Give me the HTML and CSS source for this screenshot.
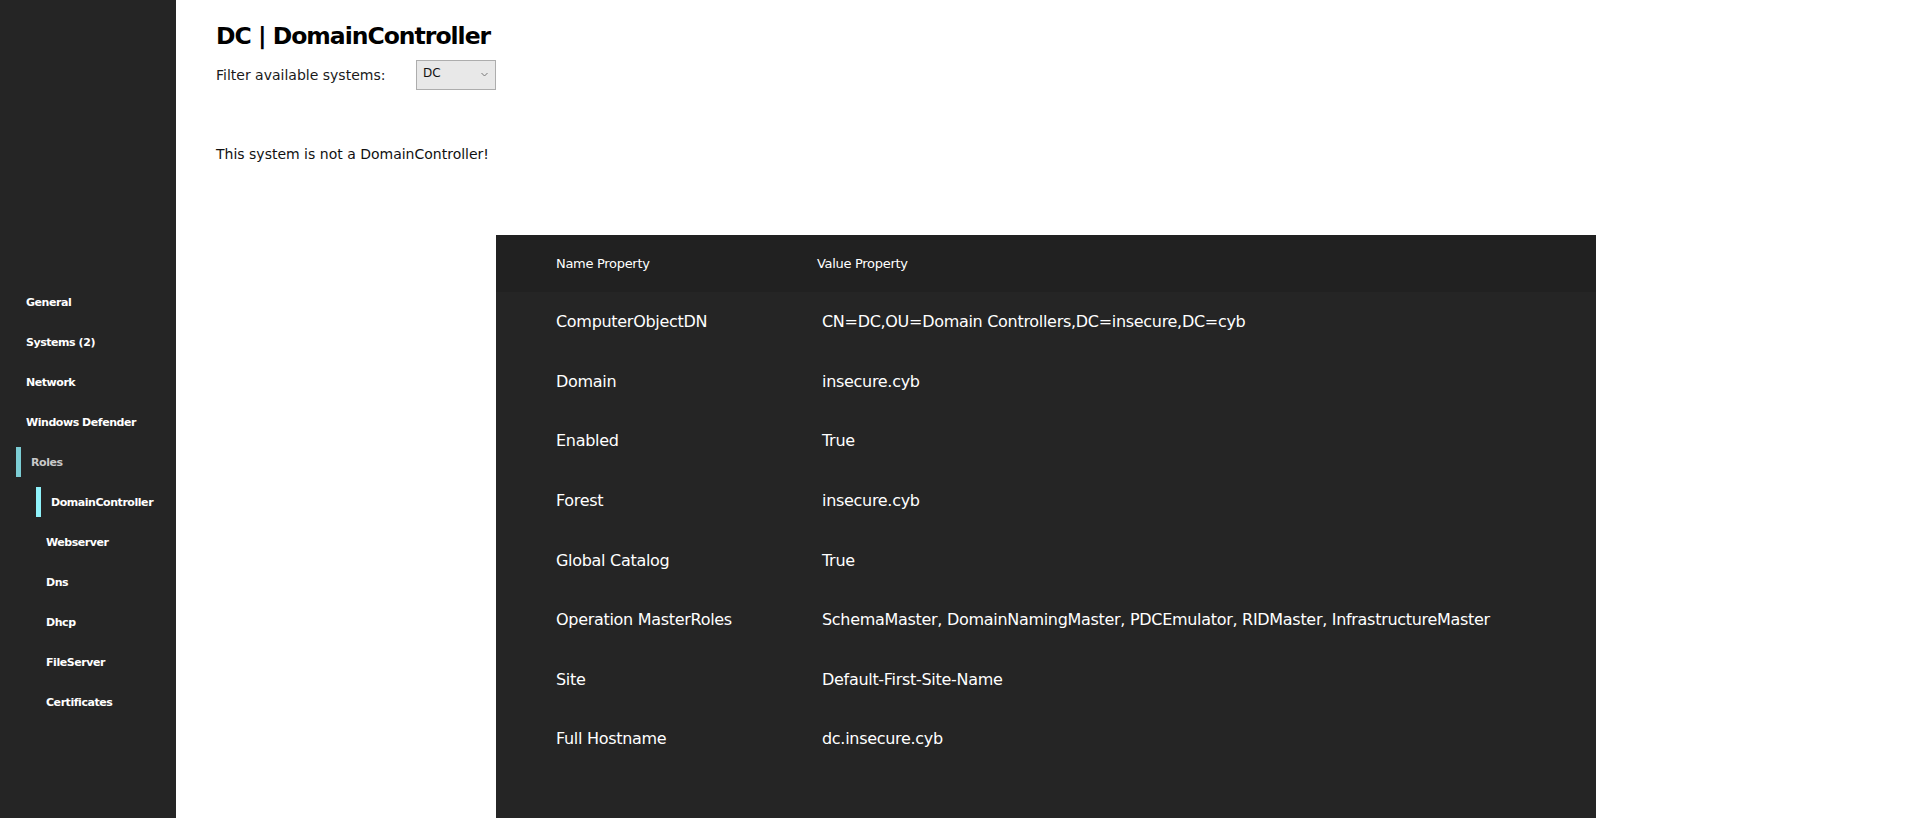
FILE: index.html
```html
<!DOCTYPE html>
<html>
<head>
<meta charset="utf-8">
<link rel="stylesheet" href="styles.css">
</head>
<body>
<div class="app">
  <nav class="sidebar">
    <a class="nav-item">General</a>
    <a class="nav-item">Systems (2)</a>
    <a class="nav-item">Network</a>
    <a class="nav-item">Windows Defender</a>
    <a class="nav-item active-parent">Roles</a>
    <a class="nav-item sub active">DomainController</a>
    <a class="nav-item sub">Webserver</a>
    <a class="nav-item sub">Dns</a>
    <a class="nav-item sub">Dhcp</a>
    <a class="nav-item sub">FileServer</a>
    <a class="nav-item sub">Certificates</a>
  </nav>
  <main class="main">
    <h1 class="title">DC | DomainController</h1>
    <div class="filter">
      <label class="filter-label">Filter available systems:</label>
      <div class="select">
        <span>DC</span>
        <svg class="chev" width="7" height="5" viewBox="0 0 7 5"><path d="M0.5 1 L3.5 4 L6.5 1" fill="none" stroke="#777" stroke-width="1"/></svg>
      </div>
    </div>
    <p class="notice">This system is not a DomainController!</p>
    <div class="table">
      <div class="thead">
        <div class="col-name">Name Property</div>
        <div class="col-value">Value Property</div>
      </div>
      <div class="row"><div class="col-name">ComputerObjectDN</div><div class="col-value">CN=DC,OU=Domain Controllers,DC=insecure,DC=cyb</div></div>
      <div class="row"><div class="col-name">Domain</div><div class="col-value">insecure.cyb</div></div>
      <div class="row"><div class="col-name">Enabled</div><div class="col-value">True</div></div>
      <div class="row"><div class="col-name">Forest</div><div class="col-value">insecure.cyb</div></div>
      <div class="row"><div class="col-name">Global Catalog</div><div class="col-value">True</div></div>
      <div class="row"><div class="col-name">Operation MasterRoles</div><div class="col-value">SchemaMaster, DomainNamingMaster, PDCEmulator, RIDMaster, InfrastructureMaster</div></div>
      <div class="row"><div class="col-name">Site</div><div class="col-value">Default-First-Site-Name</div></div>
      <div class="row"><div class="col-name">Full Hostname</div><div class="col-value">dc.insecure.cyb</div></div>
    </div>
  </main>
</div>
</body>
</html>
```

FILE: styles.css
```css
html, body {
  margin: 0;
  padding: 0;
  background: #ffffff;
  font-family: "DejaVu Sans", sans-serif;
  overflow: hidden;
}

.app {
  display: flex;
  min-height: 100vh;
}

.sidebar {
  width: 176px;
  flex: 0 0 176px;
  background: #252525;
  display: flex;
  flex-direction: column;
  gap: 10px;
  padding-top: 287px;
  box-sizing: border-box;
  min-height: 100vh;
}

.nav-item {
  display: flex;
  align-items: center;
  height: 30px;
  padding-left: 26px;
  color: #ffffff;
  font-weight: bold;
  font-size: 11px;
  letter-spacing: -0.45px;
  box-sizing: border-box;
}

.nav-item.sub {
  padding-left: 46px;
}

.nav-item.active-parent {
  margin-left: 16px;
  padding-left: 10px;
  border-left: 5px solid #7ccdd4;
  color: #c9c9c9;
}

.nav-item.sub.active {
  margin-left: 36px;
  padding-left: 10px;
  border-left: 5px solid #8ff2fa;
  color: #ffffff;
}

.main {
  flex: 1;
  padding: 22px 0 0 40px;
}

.title {
  margin: 0;
  font-size: 23.5px;
  line-height: 29px;
  font-weight: bold;
  color: #000;
  letter-spacing: -1px;
}

.filter {
  display: flex;
  align-items: center;
  margin-top: 9px;
}

.filter-label {
  width: 200px;
  font-size: 14px;
  color: #1a1a1a;
  letter-spacing: 0;
}

.select {
  width: 80px;
  height: 30px;
  box-sizing: border-box;
  background: #e8e8e8;
  border: 1px solid #adadad;
  display: flex;
  align-items: center;
  justify-content: space-between;
  padding: 0 7px 0 6px;
  font-size: 12px;
  color: #111;
}

.select span {
  margin-top: -5px;
}

.chev {
  margin-top: -2px;
}

.notice {
  margin: 55px 0 0 0;
  font-size: 14px;
  line-height: 18px;
  color: #111;
  letter-spacing: 0;
}

.table {
  margin: 72px 0 0 280px;
  width: 1100px;
  background: #252525;
  padding-bottom: 80px;
  color: #ffffff;
}

.thead {
  display: flex;
  align-items: center;
  height: 57px;
  background: #212121;
  font-size: 13px;
  letter-spacing: -0.3px;
}

.thead .col-name {
  width: 261px;
  padding-left: 60px;
}

.row {
  display: flex;
  align-items: center;
  height: 59.6px;
  font-size: 16px;
  letter-spacing: -0.3px;
}

.row .col-name {
  width: 266px;
  padding-left: 60px;
}

.col-value {
  white-space: nowrap;
}
```
